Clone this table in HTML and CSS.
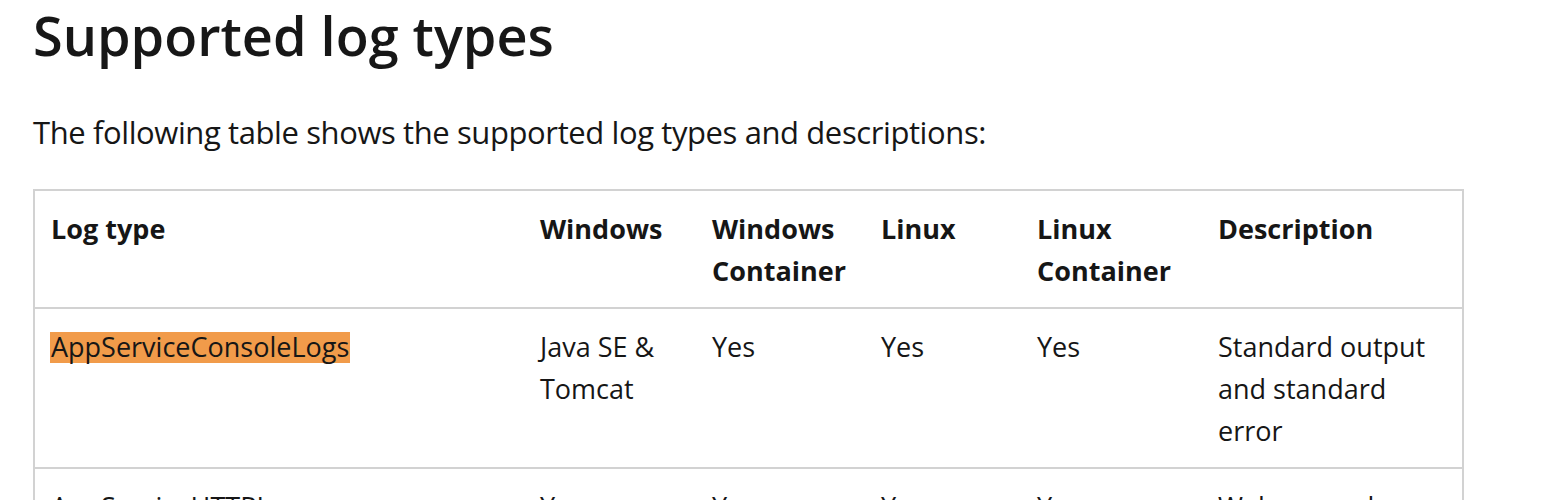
FILE: index.html
```html
<!DOCTYPE html>
<html lang="en">
<head>
<meta charset="utf-8">
<title>Supported log types</title>
<link rel="stylesheet" href="styles.css">
</head>
<body>
<main class="content">
  <h2 class="title">Supported log types</h2>
  <p class="intro">The following table shows the supported log types and descriptions:</p>
  <table class="logs">
    <colgroup>
      <col class="c1"><col class="c2"><col class="c3"><col class="c4"><col class="c5"><col class="c6">
    </colgroup>
    <thead>
      <tr>
        <th>Log type</th>
        <th>Windows</th>
        <th>Windows Container</th>
        <th>Linux</th>
        <th>Linux Container</th>
        <th>Description</th>
      </tr>
    </thead>
    <tbody>
      <tr>
        <td><mark class="hl">AppServiceConsoleLogs</mark></td>
        <td>Java SE &amp; Tomcat</td>
        <td>Yes</td>
        <td>Yes</td>
        <td>Yes</td>
        <td>Standard output and standard error</td>
      </tr>
      <tr>
        <td>AppServiceHTTPLogs</td>
        <td>Yes</td>
        <td>Yes</td>
        <td>Yes</td>
        <td>Yes</td>
        <td>Web server logs</td>
      </tr>
    </tbody>
  </table>
</main>
</body>
</html>
```

FILE: styles.css
```css
html, body {
  margin: 0;
  padding: 0;
  background: #ffffff;
}

body {
  font-family: "Open Sans", "Noto Sans", sans-serif;
  color: #161616;
}

.content {
  padding: 3px 0 0 33px;
}

.title {
  margin: 0;
  font-size: 54px;
  font-weight: 600;
  line-height: 64px;
  color: #171717;
}

.intro {
  margin: 41px 0 0 0;
  font-size: 31px;
  letter-spacing: -0.4px;
  line-height: 48px;
}

.logs {
  margin-top: 33px;
  border-collapse: separate;
  border-spacing: 0;
  border: 2px solid #d2d2d2;
  table-layout: fixed;
  width: 1431px;
  font-size: 27px;
  line-height: 42px;
}

.c1 { width: 489px; }
.c2 { width: 172px; }
.c3 { width: 169px; }
.c4 { width: 156px; }
.c5 { width: 181px; }
.c6 { width: 260px; }

.logs th,
.logs td {
  padding: 17px 16px 15px 16px;
  text-align: left;
  vertical-align: top;
  border-bottom: 2px solid #d2d2d2;
}

.logs tbody tr:last-child td {
  border-bottom: 0;
}

.logs th {
  font-weight: 700;
}

.hl {
  color: #161616;
  padding: 0 1px;
  margin-left: -1px;
  background: linear-gradient(#f19b4a, #f19b4a) 0 4px / 100% 31px no-repeat;
}
```
